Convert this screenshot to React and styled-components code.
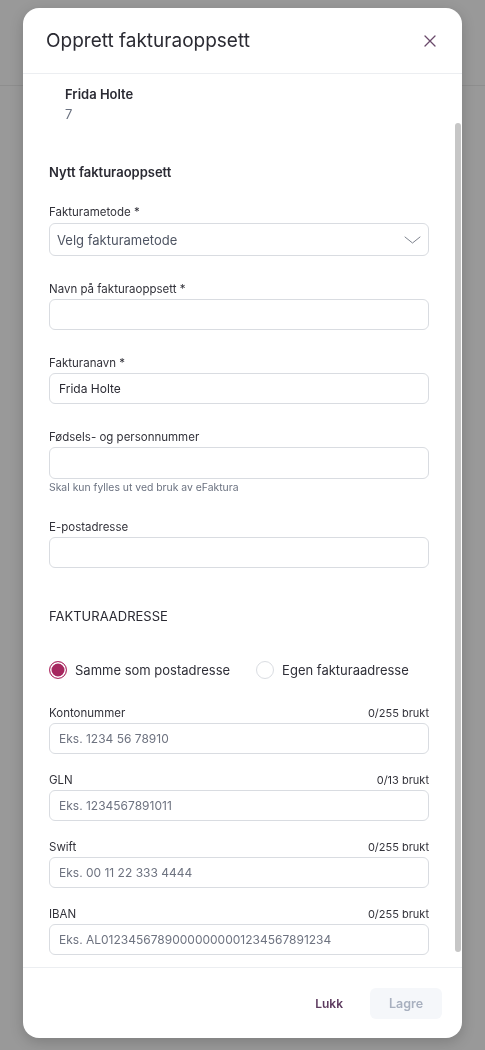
import React from "react";
import styled, { createGlobalStyle } from "styled-components";

const Global = createGlobalStyle`
  html, body { margin: 0; padding: 0; height: 100%; }
  body {
    background: #999999;
    font-family: Inter, "Noto Sans", "Liberation Sans", sans-serif;
    color: #2a2a33;
    -webkit-font-smoothing: antialiased;
  }
  * { box-sizing: border-box; }
`;

const Page = styled.div`
  height: 1050px;
  overflow: hidden;
`;

const PageHeader = styled.div`
  height: 86px;
  border-bottom: 1px solid #8e8e8e;
`;

const Overlay = styled.div`
  position: fixed;
  inset: 0;
  display: flex;
  justify-content: center;
  align-items: flex-start;
  padding-top: 8px;
`;

const Modal = styled.div`
  width: 439px;
  height: 1030px;
  background: #fff;
  border-radius: 16px;
  box-shadow: 0 4px 14px rgba(0, 0, 0, 0.18);
  display: flex;
  flex-direction: column;
  overflow: hidden;
`;

const Header = styled.div`
  height: 66px;
  flex: none;
  display: flex;
  align-items: center;
  justify-content: space-between;
  padding: 0 25px 0 23px;
  border-bottom: 1px solid #eceef1;
`;

const Title = styled.h2`
  margin: 0;
  font-size: 19px;
  font-weight: 400;
  color: #2b2b33;
`;

const CloseButton = styled.button`
  border: 0;
  background: none;
  padding: 0;
  width: 14px;
  height: 14px;
  display: flex;
  align-items: center;
  justify-content: center;
  cursor: pointer;
`;

const BodyRow = styled.div`
  flex: 1;
  min-height: 0;
  display: flex;
`;

const Content = styled.div`
  flex: 1;
  overflow: hidden;
  padding: 11px 25px 0 26px;
`;

const ScrollTrack = styled.div`
  width: 8px;
  flex: none;
  padding: 49px 1px 15px 1px;
  display: flex;
`;

const ScrollThumb = styled.div`
  flex: 1;
  border-radius: 3px;
  background: #c6c6c6;
`;

const Customer = styled.div`
  padding-left: 16px;
  display: flex;
  flex-direction: column;
  gap: 2px;
`;

const CustomerName = styled.div`
  font-size: 13px;
  font-weight: 600;
  line-height: 18px;
  color: #2a2a33;
`;

const CustomerNo = styled.div`
  font-size: 13px;
  line-height: 18px;
  color: #6b7280;
`;

const SectionTitle = styled.h3`
  margin: 40px 0 23px;
  font-size: 13px;
  font-weight: 600;
  line-height: 18px;
  color: #2a2a33;
`;

const Fields = styled.div`
  display: flex;
  flex-direction: column;
  gap: ${(p) => p.$gap}px;
`;

const Field = styled.div`
  display: flex;
  flex-direction: column;
`;

const LabelRow = styled.div`
  display: flex;
  justify-content: space-between;
  align-items: center;
  height: 16px;
  margin-bottom: ${(p) => p.$mb ?? 2}px;
  font-size: 11.5px;
  color: #33333b;
`;

const Counter = styled.span`
  font-size: 11px;
  color: #33333b;
`;

const Input = styled.input`
  width: 100%;
  height: ${(p) => p.$h ?? 32}px;
  border: 1px solid #d9dce1;
  border-radius: 6px;
  padding: 0 9px;
  font-family: inherit;
  font-size: 12px;
  color: #2a2a33;
  background: #fff;
  outline: none;
  &::placeholder { color: #6e7380; }
`;

const Select = styled.div`
  height: 33px;
  border: 1px solid #d9dce1;
  border-radius: 6px;
  padding: 0 7px 0 7px;
  display: flex;
  align-items: center;
  justify-content: space-between;
  font-size: 13px;
  color: #4f5563;
`;

const Helper = styled.div`
  margin-top: 2px;
  font-size: 10.4px;
  line-height: 13px;
  color: #6b7280;
`;

const Caps = styled.div`
  margin: 39px 0 0;
  font-size: 13px;
  line-height: 18px;
  color: #2a2a33;
`;

const RadioGroup = styled.div`
  margin: 36px 0 26px;
  display: flex;
  gap: 26px;
`;

const RadioOption = styled.label`
  display: flex;
  align-items: center;
  gap: 8px;
  font-size: 13px;
  line-height: 18px;
  color: #2f2f38;
`;

const RadioDot = styled.span`
  width: 18px;
  height: 18px;
  border-radius: 50%;
  flex: none;
  border: ${(p) => (p.$checked ? "1.5px solid #b2386c" : "1px solid #dadde2")};
  background: ${(p) => (p.$checked ? "#a6275f" : "#fff")};
  box-shadow: ${(p) => (p.$checked ? "inset 0 0 0 1.5px #fff" : "none")};
`;

const Footer = styled.div`
  height: 71px;
  flex: none;
  border-top: 1px solid #eceef1;
  display: flex;
  align-items: center;
  justify-content: flex-end;
  gap: 10px;
  padding: 0 20px 0 0;
`;

const GhostButton = styled.button`
  border: 0;
  background: none;
  font-family: inherit;
  font-size: 12px;
  font-weight: 600;
  color: #5d3b5f;
  height: 31px;
  padding: 0 17px;
`;

const PrimaryButton = styled.button`
  border: 0;
  border-radius: 6px;
  background: #f5f7fa;
  font-family: inherit;
  font-size: 12.5px;
  font-weight: 600;
  color: #a8b0bf;
  width: 72px;
  height: 31px;
`;

const Chevron = () => (
  <svg width="17" height="8" viewBox="0 0 17 8" fill="none">
    <path d="M1 1l7.5 6L16 1" stroke="#7d828d" strokeWidth="1" strokeLinecap="round" strokeLinejoin="round" />
  </svg>
);

const CloseIcon = () => (
  <svg width="12" height="12" viewBox="0 0 12 12" fill="none">
    <path d="M1 1l10 10M11 1L1 11" stroke="#6a4a6b" strokeWidth="1.3" strokeLinecap="round" />
  </svg>
);

const counted = [
  { label: "Kontonummer", count: "0/255 brukt", ph: "Eks. 1234 56 78910" },
  { label: "GLN", count: "0/13 brukt", ph: "Eks. 1234567891011" },
  { label: "Swift", count: "0/255 brukt", ph: "Eks. 00 11 22 333 4444" },
  { label: "IBAN", count: "0/255 brukt", ph: "Eks. AL01234567890000000001234567891234" },
];

export default function App() {
  return (
    <Page>
      <Global />
      <PageHeader />
      <Overlay>
        <Modal>
          <Header>
            <Title>Opprett fakturaoppsett</Title>
            <CloseButton aria-label="Lukk">
              <CloseIcon />
            </CloseButton>
          </Header>
          <BodyRow>
            <Content>
              <Customer>
                <CustomerName>Frida Holte</CustomerName>
                <CustomerNo>7</CustomerNo>
              </Customer>

              <SectionTitle>Nytt fakturaoppsett</SectionTitle>

              <Fields $gap={25}>
                <Field>
                  <LabelRow $mb={3}>Fakturametode *</LabelRow>
                  <Select>
                    <span>Velg fakturametode</span>
                    <Chevron />
                  </Select>
                </Field>
                <Field>
                  <LabelRow>Navn på fakturaoppsett *</LabelRow>
                  <Input $h={31} />
                </Field>
                <Field>
                  <LabelRow>Fakturanavn *</LabelRow>
                  <Input $h={31} defaultValue="Frida Holte" />
                </Field>
                <Field>
                  <LabelRow>Fødsels- og personnummer</LabelRow>
                  <Input />
                  <Helper>Skal kun fylles ut ved bruk av eFaktura</Helper>
                </Field>
                <Field>
                  <LabelRow>E-postadresse</LabelRow>
                  <Input $h={31} />
                </Field>
              </Fields>

              <Caps>FAKTURAADRESSE</Caps>

              <RadioGroup>
                <RadioOption>
                  <RadioDot $checked />
                  Samme som postadresse
                </RadioOption>
                <RadioOption>
                  <RadioDot />
                  Egen fakturaadresse
                </RadioOption>
              </RadioGroup>

              <Fields $gap={18}>
                {counted.map((f) => (
                  <Field key={f.label}>
                    <LabelRow>
                      <span>{f.label}</span>
                      <Counter>{f.count}</Counter>
                    </LabelRow>
                    <Input $h={31} placeholder={f.ph} />
                  </Field>
                ))}
              </Fields>
            </Content>
            <ScrollTrack>
              <ScrollThumb />
            </ScrollTrack>
          </BodyRow>
          <Footer>
            <GhostButton>Lukk</GhostButton>
            <PrimaryButton>Lagre</PrimaryButton>
          </Footer>
        </Modal>
      </Overlay>
    </Page>
  );
}
